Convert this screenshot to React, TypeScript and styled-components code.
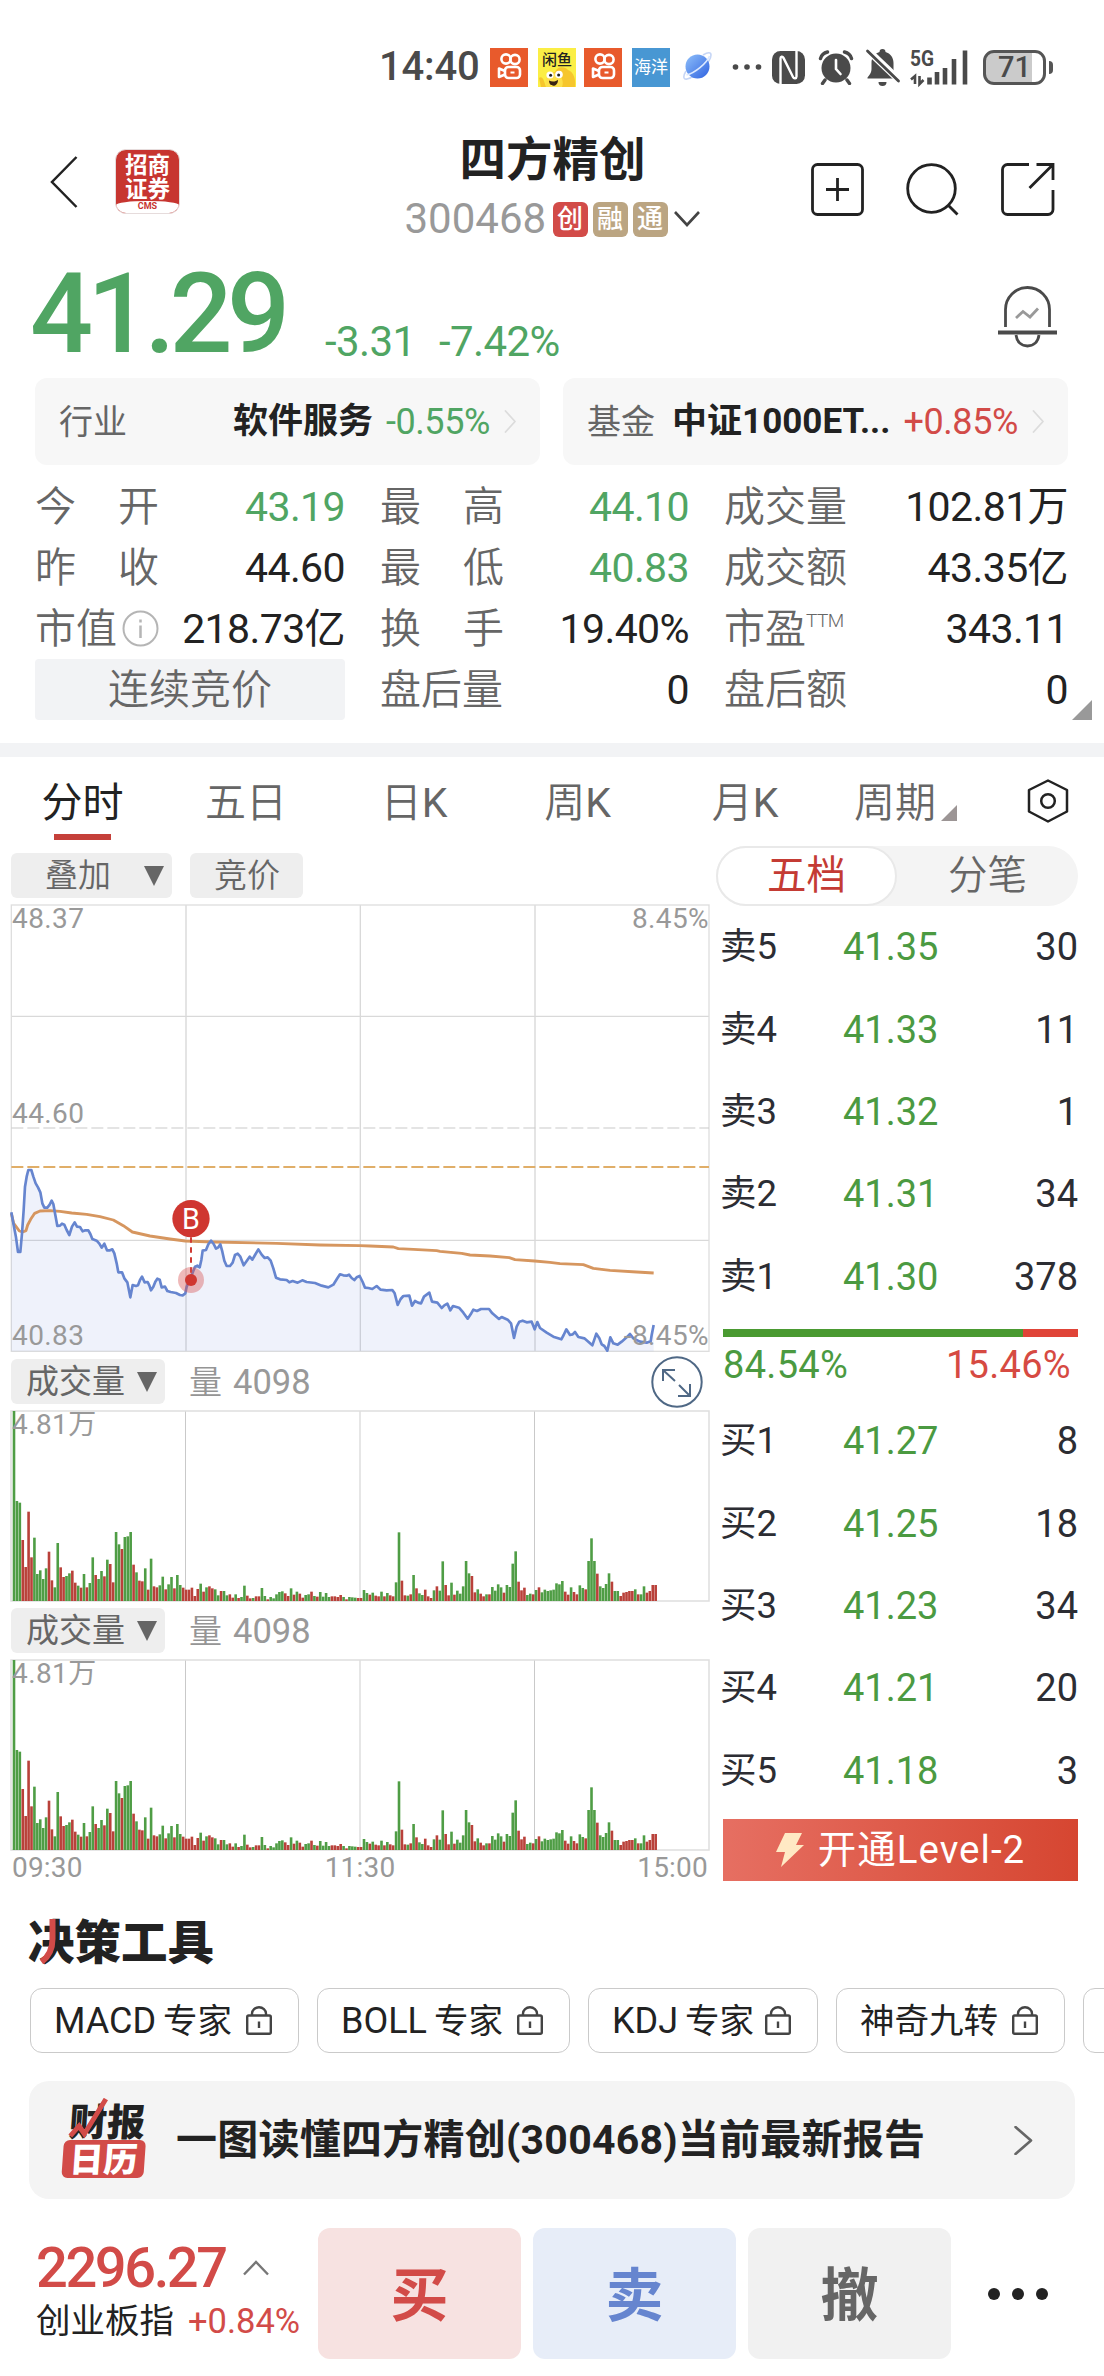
import React from 'react';
import styled, { createGlobalStyle } from 'styled-components';

const RED = '#d24b48';
const GREEN = '#50a563';
const BOOK_GREEN = '#4b9a41';
const INK = '#222';
const GREY = '#666';
const FONT = 'Roboto, "Noto Sans CJK SC", sans-serif';

const Global = createGlobalStyle`
  *, *::before, *::after { box-sizing: border-box; }
  html, body { margin: 0; background: #fff; }
  body { font-family: ${FONT}; color: ${INK}; overflow-x: hidden; }
  svg { display: block; flex: none; }
`;

const Screen = styled.div`
  width: 1104px;
  height: 2376px;
  overflow: hidden;
  background: #fff;
  white-space: nowrap;
`;

/* ---------- status bar ---------- */

const StatusBar = styled.div`
  height: 100px;
  padding: 34px 50px 0 379px;
  display: flex;
  align-items: center;
  color: #4a4a4a;
`;
const Clock = styled.span`
  width: 111px;
  font-size: 40px;
  line-height: 48px;
  font-weight: 500;
  letter-spacing: -0.2px;
`;
const AppTile = styled.span<{ $bg: string; $gap: number }>`
  width: 38px;
  height: 39px;
  margin-right: ${(p) => p.$gap}px;
  background: ${(p) => p.$bg};
  color: #fff;
  display: flex;
  align-items: center;
  justify-content: center;
  font-size: 17px;
  line-height: 20px;
`;
const Spaced = styled.span<{ $left: number }>`
  display: flex;
  margin-left: ${(p) => p.$left}px;
`;
const Battery = styled.span`
  width: 63px;
  height: 35px;
  margin-left: 15px;
  border: 3.5px solid #555;
  border-radius: 11px;
  background: linear-gradient(90deg, #cbcbcb 46px, #fff 46px);
  font-size: 29px;
  line-height: 28px;
  font-weight: 500;
  text-align: center;
`;
const BatteryTip = styled.span`
  width: 4px;
  height: 13px;
  margin-left: 3px;
  border-radius: 0 4px 4px 0;
  background: #555;
`;

const KuaiIcon = () => (
  <svg width="28" height="32" viewBox="0 0 28 32" fill="none" stroke="#fff" strokeWidth="2.6">
    <circle cx="11" cy="8" r="4.6" />
    <circle cx="20" cy="8.5" r="4.6" />
    <rect x="10" y="16" width="15" height="11" rx="3.5" />
    <path d="M10 20 4 17.5v8.5l6-2.5" strokeLinejoin="round" />
    <path d="M15.5 21.5h4" strokeWidth="2" />
  </svg>
);

const FishIcon = () => (
  <svg width="38" height="39" viewBox="0 0 38 39">
    <rect width="38" height="39" fill="#fbee45" />
    <path d="M9 39c-2-6 0-14 8-15 2-6 10-6 13-2 6 2 8 10 7 17z" fill="#f6c62d" />
    <path d="M1 30c2-2 4 0 5 3l2 6H3z" fill="#f6c62d" />
    <path d="M8 39c-2-9 3-15 10-13 6 1 8 8 6 13z" fill="#fde04a" />
    <circle cx="12" cy="27" r="3.6" fill="#fff" />
    <circle cx="21" cy="26.5" r="3.8" fill="#fff" />
    <circle cx="12.6" cy="27.3" r="1.5" fill="#222" />
    <circle cx="20.6" cy="27" r="1.5" fill="#222" />
    <path d="M11 32.5c3 1.6 7 1.2 9-.8 0 4-2.4 6-4.6 6S11 36 11 32.5z" fill="#3a2412" />
    <text x="19" y="17" textAnchor="middle" fontSize="15" fontWeight="500" fill="#222" fontFamily={'"Noto Sans CJK SC", sans-serif'}>闲鱼</text>
  </svg>
);

const GlobeIcon = () => (
  <svg width="30" height="32" viewBox="0 0 30 32">
    <defs>
      <linearGradient id="globe" x1="0" y1="0" x2="1" y2="1">
        <stop offset="0" stopColor="#8fc0fa" />
        <stop offset="1" stopColor="#2f62e0" />
      </linearGradient>
    </defs>
    <path d="M20 4c5-3 8-3 8 0 0 7-15 22-24 24-4 1-4-3-1-8" fill="none" stroke="#c6d6f6" strokeWidth="1.6" />
    <circle cx="14.5" cy="15.5" r="12" fill="url(#globe)" />
    <path d="M3.5 24C12 22 24 12 26.500 5" fill="none" stroke="#dce9ff" strokeWidth="1.6" />
  </svg>
);

const StatusIcons = () => (
  <>
    <svg width="30" height="8" viewBox="0 0 30 8" fill="#4a4a4a">
      <circle cx="3.5" cy="4" r="2.8" /><circle cx="15" cy="4" r="2.8" /><circle cx="26.5" cy="4" r="2.8" />
    </svg>
    <Spaced $left={10}>
      <svg width="33" height="33" viewBox="0 0 33 33">
        <rect width="33" height="33" rx="8.5" fill="#4a4a4a" />
        <path d="M8.5 33V7.5c0-2 2-2.500 3-.6L21 26c1 2 3.500 1.500 3.500-.5V0" fill="none" stroke="#fff" strokeWidth="2.400" />
      </svg>
    </Spaced>
    <Spaced $left={13}>
      <svg width="36" height="35" viewBox="0 0 36 35" fill="none" stroke="#4a4a4a" strokeLinecap="round">
        <circle cx="18" cy="18" r="14.5" fill="#4a4a4a" stroke="none" />
        <path d="M2.500 8.500C3.500 5 6 2.800 9.500 2M33.500 8.500C32.500 5 30 2.800 26.500 2" strokeWidth="3.4" />
        <path d="m7 30-2.500 3.500M29 30l2.500 3.500" strokeWidth="3.4" />
        <path d="M18 10v9l4.500 5" stroke="#fff" strokeWidth="2.6" />
      </svg>
    </Spaced>
    <Spaced $left={11}>
      <svg width="36" height="38" viewBox="0 0 36 38">
        <path d="M17.500 1c2 0 3 1.200 3 3 5 1.500 8 5.500 8 11v6c0 3 1 5 3.500 8.500v1H2.500v-1C5.500 26 6.500 24 6.500 21v-6c0-5.500 3-9.500 8-11 0-1.800 1-3 3-3z" fill="#4a4a4a" />
        <path d="M13.500 34h8a4 4 0 0 1-8 0z" fill="#4a4a4a" />
        <path d="M2 1.500 35 33" stroke="#fff" strokeWidth="7" />
        <path d="M2.500 3 33.500 33" stroke="#4a4a4a" strokeWidth="2.800" strokeLinecap="round" />
      </svg>
    </Spaced>
    <Spaced $left={9}>
      <svg width="58" height="48" viewBox="0 -6 58 48" overflow="visible">
        <text x="0" y="17" fontSize="22" fontWeight="700" fill="#4a4a4a" textLength="24" lengthAdjust="spacingAndGlyphs" fontFamily="Roboto">5G</text>
        <path d="M5 35v-8L1 30.500M9.500 27v8l4-4" fill="none" stroke="#4a4a4a" strokeWidth="2.6" />
        <path d="M19.500 35.500v-7M27 35.500V23M35 35.500V19M44 35.500V10M55 35.500V1.500" stroke="#4a4a4a" strokeWidth="4.600" />
      </svg>
    </Spaced>
  </>
);

/* ---------- header ---------- */

const Header = styled.header`
  height: 157px;
  padding: 31px 49px 0 50px;
  display: grid;
  grid-template-columns: 1fr auto 1fr;
`;
const HeaderLeft = styled.div`
  display: flex;
  align-items: center;
  height: 101px;
  gap: 37px;
`;
const HeaderRight = styled.div`
  display: flex;
  align-items: center;
  justify-content: flex-end;
  height: 117px;
  gap: 42px;
`;
const BrokerLogo = styled.div`
  width: 65px;
  height: 65px;
  border-radius: 11px;
  background: #c73530;
  border: 1px solid #e6dcdc;
  overflow: hidden;
  display: flex;
  flex-direction: column;
  align-items: center;
  padding-top: 3px;
  color: #fff;
  font-size: 22.5px;
  line-height: 24px;
  font-weight: 600;
`;
const BrokerTag = styled.div`
  align-self: stretch;
  flex: 1;
  background: #fff;
  border-radius: 50% 50% 0 0 / 4px 4px 0 0;
  color: #c73530;
  text-align: center;
  font-size: 9px;
  line-height: 11px;
  font-weight: 700;
`;
const TitleBlock = styled.div`
  display: flex;
  flex-direction: column;
  align-items: center;
`;
const StockName = styled.h1`
  margin: 0;
  font-size: 46.5px;
  line-height: 58px;
  font-weight: 700;
`;
const CodeLine = styled.div`
  display: flex;
  align-items: center;
  height: 60px;
`;
const Code = styled.span`
  width: 148px;
  font-size: 42px;
  line-height: 48px;
  color: #999;
`;
const Tag = styled.span<{ $bg: string }>`
  width: 35px;
  height: 35px;
  margin-right: 5px;
  border-radius: 6px;
  background: ${(p) => p.$bg};
  color: #fff;
  font-size: 26px;
  line-height: 34px;
  font-weight: 500;
  text-align: center;
`;

/* ---------- quote ---------- */

const Quote = styled.section`
  height: 121px;
  padding: 2px 47px 0 30px;
  display: flex;
`;
const LastPrice = styled.div`
  width: 295px;
  font-size: 111px;
  line-height: 110px;
  font-weight: 500;
  letter-spacing: -5.8px;
  color: ${GREEN};
`;
const Change = styled.div<{ $width: number }>`
  width: ${(p) => p.$width}px;
  padding-top: 57px;
  font-size: 42px;
  line-height: 52px;
  letter-spacing: -0.6px;
  color: ${GREEN};
`;
const BellSlot = styled.div`
  margin-left: auto;
  padding-top: 27px;
`;

const LinkCards = styled.section`
  padding: 0 36px 0 35px;
  display: grid;
  grid-template-columns: 1fr 1fr;
  gap: 23px;
`;
const LinkCard = styled.div`
  height: 87px;
  padding: 0 23px 0 24px;
  border-radius: 12px;
  background: #f7f7f7;
  display: flex;
  align-items: center;
  font-size: 34px;
  line-height: 48px;
  color: ${GREY};
`;
const CardName = styled.span`
  margin-left: auto;
  font-size: 35px;
  font-weight: 700;
  color: ${INK};
`;
const CardRate = styled.span<{ $up?: boolean }>`
  margin: 0 14px 0 13px;
  font-size: 36px;
  letter-spacing: -0.4px;
  color: ${(p) => (p.$up ? RED : GREEN)};
`;

/* ---------- stats ---------- */

const Stats = styled.section`
  position: relative;
  height: 278px;
  padding: 11px 36px 0 35px;
  display: grid;
  grid-template-columns: 310px 309px 344px;
  grid-auto-rows: 61px;
  column-gap: 35px;
`;
const Stat = styled.div`
  display: flex;
  align-items: center;
  justify-content: space-between;
  font-size: 41px;
  line-height: 60px;
`;
const StatLabel = styled.span`
  min-width: 124px;
  display: flex;
  align-items: center;
  justify-content: space-between;
  color: ${GREY};
  font-weight: 350;
`;
const StatValue = styled.span<{ $down?: boolean }>`
  color: ${(p) => (p.$down ? GREEN : INK)};
  letter-spacing: -0.6px;
`;
const Superscript = styled.sup`
  align-self: flex-start;
  flex: 1;
  margin-top: -8px;
  font-size: 19px;
  letter-spacing: -0.5px;
`;
const Phase = styled.div`
  border-radius: 4px;
  background: #f2f3f5;
  color: ${GREY};
  font-size: 41px;
  line-height: 62px;
  font-weight: 350;
  text-align: center;
`;
const Expander = styled.span`
  position: absolute;
  right: 12px;
  bottom: 23px;
  border: 10px solid;
  border-color: transparent #999 #999 transparent;
`;

const Divider = styled.div`
  height: 14px;
  background: #f2f3f5;
`;

/* ---------- period tabs ---------- */

const Tabs = styled.nav`
  height: 89px;
  padding: 16px 0 0 35px;
  display: flex;
  font-size: 41px;
  line-height: 60px;
  color: ${GREY};
`;
const Tab = styled.div<{ $width: number; $active?: boolean }>`
  width: ${(p) => p.$width}px;
  display: flex;
  justify-content: center;
  flex-wrap: wrap;
  align-content: flex-start;
  font-weight: ${(p) => (p.$active ? 400 : 350)};
  color: ${(p) => (p.$active ? INK : GREY)};
`;
const TabLatin = styled.span`
  font-weight: 400;
`;
const TabLine = styled.span`
  width: 57px;
  height: 6px;
  margin-top: 1px;
  background: #c5403a;
`;
const PeriodTab = styled.div`
  width: 150px;
  margin-left: 53px;
  display: flex;
  font-weight: 350;
`;
const Corner = styled.span`
  margin: 32px 0 0 5px;
  height: 16px;
  border: 8px solid;
  border-color: transparent #9c9595 #9c9595 transparent;
`;
const SettingsSlot = styled.span`
  margin: 6px 0 0 23px;
`;

/* ---------- market area ---------- */

const Market = styled.section`
  height: 1044px;
  padding-left: 11px;
  display: flex;
  gap: 12px;
`;
const ChartColumn = styled.div`
  width: 698px;
`;
const ChipRow = styled.div<{ $top: number; $height: number }>`
  margin-top: ${(p) => p.$top}px;
  height: ${(p) => p.$height}px;
  display: flex;
  align-items: flex-start;
  gap: 18px;
`;
const Chip = styled.div<{ $width: number; $pad: number; $strong?: boolean }>`
  width: ${(p) => p.$width}px;
  height: 45px;
  padding: 0 8px 0 ${(p) => p.$pad}px;
  border-radius: 6px;
  background: #eee;
  display: flex;
  align-items: center;
  justify-content: space-between;
  font-size: 33px;
  line-height: 46px;
  font-weight: ${(p) => (p.$strong ? 400 : 350)};
  color: ${GREY};
`;
const VolumeReading = styled.span`
  margin-left: 6px;
  display: flex;
  gap: 11px;
  font-size: 33px;
  line-height: 48px;
  font-weight: 350;
  color: #959595;
`;
const ReadingValue = styled.span`
  font-size: 34.5px;
  line-height: 46px;
  font-weight: 400;
  color: #999;
`;
const ExpandSlot = styled.span`
  margin: -3px 6px 0 auto;
`;
const Plot = styled.div<{ $height: number }>`
  position: relative;
  height: ${(p) => p.$height}px;
`;
const AxisText = styled.span<{ $top: number; $right?: boolean }>`
  position: absolute;
  top: ${(p) => p.$top}px;
  ${(p) => (p.$right ? 'right: 0;' : 'left: 1px;')}
  font-size: 28px;
  line-height: 30px;
  letter-spacing: 0.4px;
  color: #999;
`;
const Times = styled.div`
  height: 36px;
  padding: 0 1px;
  display: flex;
  justify-content: space-between;
  font-size: 28px;
  line-height: 36px;
  letter-spacing: 0.2px;
  color: #999;
`;
const ChartSvg = styled.svg`
  margin-left: -1px;
`;

const PRICE: number[] = [
  34, 247, 41, 285, 48, 322, 54, 366, 61, 366, 66, 310, 71, 240, 75, 170, 80, 140, 85, 120, 94, 120, 100, 140, 107, 160, 114, 172, 121, 187,
  127, 220, 133, 233, 142, 233, 149, 224, 155, 212, 160, 222, 165, 250, 172, 288, 180, 287, 186, 281, 193, 284, 200, 300, 208, 315, 216, 290,
  224, 277, 231, 290, 240, 291, 248, 304, 256, 301, 265, 301, 271, 312, 277, 327, 290, 332, 298, 341, 305, 353, 313, 341, 321, 361, 330, 361,
  337, 358, 343, 370, 350, 400, 355, 427, 366, 427, 373, 445, 382, 457, 391, 502, 398, 465, 408, 468, 414, 466, 420, 450, 426, 440, 434, 457,
  443, 456, 448, 466, 453, 481, 460, 470, 466, 455, 472, 446, 479, 449, 485, 472, 495, 470, 502, 483, 512, 486, 528, 489, 540, 495, 548, 496,
  556, 490, 560, 470, 573, 440, 585, 410, 592, 407, 599, 412, 604, 390, 608, 362, 618, 360, 625, 343, 633, 332, 641, 342, 648, 356, 655, 352,
  661, 343, 667, 365, 673, 392, 680, 408, 690, 408, 698, 398, 705, 375, 713, 371, 721, 380, 731, 406, 740, 393, 749, 380, 757, 389, 765, 375,
  775, 358, 785, 374, 794, 384, 803, 382, 812, 392, 820, 415, 828, 443, 840, 448, 860, 450, 868, 457, 878, 453, 893, 458, 907, 451, 920, 456,
  945, 459, 965, 467, 985, 472, 1000, 464, 1012, 445, 1020, 433, 1030, 436, 1040, 437, 1047, 434, 1055, 444, 1063, 450, 1070, 442, 1079, 438,
  1088, 456, 1095, 473, 1105, 474, 1117, 477, 1130, 468, 1142, 479, 1160, 481, 1177, 480, 1184, 490, 1193, 525, 1202, 507, 1210, 498, 1228, 497,
  1236, 527, 1245, 513, 1254, 518, 1263, 520, 1272, 500, 1288, 488, 1296, 515, 1312, 518, 1325, 534, 1333, 526, 1342, 521, 1351, 541, 1359, 528,
  1377, 533, 1390, 548, 1403, 566, 1412, 553, 1420, 539, 1431, 543, 1443, 537, 1467, 537, 1477, 550, 1497, 567, 1505, 561, 1523, 569, 1533, 580,
  1542, 624, 1550, 590, 1558, 575, 1568, 572, 1580, 577, 1595, 575, 1604, 598, 1612, 576, 1620, 594, 1640, 608, 1660, 620, 1684, 628, 1691, 615,
  1699, 598, 1710, 615, 1718, 613, 1725, 606, 1735, 621, 1753, 625, 1765, 635, 1777, 646, 1789, 611, 1798, 625, 1805, 643, 1813, 648, 1822, 662,
  1831, 622, 1840, 640, 1853, 644, 1865, 635, 1880, 622, 1890, 612, 1900, 625, 1920, 635, 1940, 638, 1952, 634, 1955, 615, 1961, 585,
];

const AVERAGE: number[] = [
  34, 250, 41, 280, 50, 292, 58, 303, 68, 306, 78, 302, 83, 285, 92, 268, 104, 250, 120, 243, 150, 242, 180, 244, 215, 249, 260, 253, 300, 260,
  340, 270, 370, 287, 397, 306, 450, 318, 510, 327, 556, 333, 640, 336, 830, 340, 960, 345, 1080, 347, 1110, 348, 1180, 351, 1195, 356, 1240, 358,
  1310, 362, 1320, 364, 1385, 370, 1410, 375, 1470, 378, 1528, 383, 1545, 389, 1604, 393, 1650, 397, 1680, 401, 1750, 404, 1780, 415, 1830, 421,
  1910, 426, 1961, 429,
];

/* One entry per minute: direction (g falling, r rising) and height in thirds of a pixel. */
const VOLUME = (
  'g570 g300 g295 r183 r102 r268 r131 g190 g81 g92 g66 g98 r148 r62 g41 g174 r101 r72 g75 g83 r91 r55 g46 r40 g81 r41 g54 g131 r78 g66 ' +
  'g90 r74 g124 r111 r56 g207 g170 r156 g192 g194 g207 r109 g86 r61 r59 g98 r34 g127 r44 r41 g47 g73 r35 g50 g72 r38 g78 g48 r40 r34 ' +
  'r34 r40 r15 r36 g52 r28 g41 r44 r38 g35 g17 r30 g30 g17 r20 r10 g20 r9 g12 g46 r16 r8 g9 r14 r14 g39 g15 r5 g12 g8 ' +
  'g20 g27 g29 r23 r15 g38 r19 g28 r22 r10 g18 g20 r28 g15 r13 g27 g13 g24 g12 r14 r14 r12 r18 g12 r5 g12 g11 g10 r9 r9 ' +
  'g33 g24 r19 g25 r16 r14 g28 r14 g24 r17 r14 g56 g206 r61 r17 g16 r20 g78 r38 g23 g18 r34 r14 r9 g32 r44 g31 g119 r48 r17 ' +
  'g55 r19 g31 g22 g44 g120 g83 r75 r26 g35 r22 r14 g20 r20 g42 g31 g50 g41 r25 g48 g42 g112 g149 r58 r32 r40 g18 g22 r20 g33 ' +
  'r41 g26 g34 g30 g32 g34 g53 g50 g60 r28 r19 g41 r27 r20 g47 g39 r35 g120 g188 g120 r82 g44 g39 g51 g83 r58 g30 g30 r15 r25 ' +
  'r27 r30 r30 g35 r20 g20 g44 r25 r30 r48 r48'
)
  .split(' ')
  .map((s) => ({ up: s[0] === 'r', h: Number(s.slice(1)) / 3 }));

const pairs = (a: number[]) => {
  const out: string[] = [];
  for (let i = 0; i < a.length; i += 2) out.push(a[i] + ',' + a[i + 1]);
  return out.join(' ');
};

const PriceChart = () => (
  <ChartSvg width="700" height="448" viewBox="30 -678 2100 1344">
    <g fill="none" strokeWidth="4">
      <path d="M558 -675V664M1605 -675V664" stroke="#c9c9c9" strokeWidth="3" />
      <path d="M34 -341H2127M1081 -675V664M34 331H2127" stroke="#d9d9d9" />
      <rect x="34" y="-675" width="2093" height="1339" stroke="#dedede" />
      <path d="M34 -6H2127" stroke="#c9c9c9" strokeWidth="3" strokeDasharray="36 12" />
      <path d="M34 111H2127" stroke="#e0ae68" strokeWidth="6" strokeDasharray="36 12" />
    </g>
    <polygon points={'34,664 ' + pairs(PRICE) + ' 1961,664'} fill="#5e81d8" fillOpacity="0.1" />
    <polyline points={pairs(AVERAGE)} fill="none" stroke="#d6965f" strokeWidth="8.5" strokeLinejoin="round" />
    <polyline points={pairs(PRICE)} fill="none" stroke="#6685cf" strokeWidth="8" strokeLinejoin="round" />
    <path d="M573 322V450" stroke="#cf3a33" strokeWidth="6" strokeDasharray="16 14" />
    <circle cx="573" cy="450" r="39" fill="#d8504f" fillOpacity="0.4" />
    <circle cx="573" cy="450" r="18" fill="#cf3630" />
    <circle cx="573" cy="266" r="56" fill="#cf3630" />
    <text x="573" y="296" fontSize="86" fill="#fff" fontFamily="Roboto" fontWeight="400" textAnchor="middle">B</text>
  </ChartSvg>
);

const VolumeChart = () => (
  <ChartSvg width="700" height="192" viewBox="0 0 700 192">
    <path d="M175.500 1V191M524.500 1V191" stroke="#c9c9c9" />
    <path d="M350 1V191" stroke="#dedede" strokeWidth="1.500" />
    <rect x="1" y="1" width="698" height="190" fill="none" stroke="#dedede" strokeWidth="1.500" />
    {VOLUME.map((v, i) => (
      <rect key={i} x={2.7 + i * 2.9167} y={191 - v.h} width="2.600" height={v.h} fill={v.up ? '#b9413a' : '#4f9d45'} />
    ))}
  </ChartSvg>
);

const DownTriangle = () => (
  <svg width="20" height="20" viewBox="0 0 20 20"><path d="M0 0h20L10 20z" fill="#666" /></svg>
);

const ExpandIcon = () => (
  <svg width="52" height="52" viewBox="0 0 52 52" fill="none" stroke="#4f6885" strokeWidth="2">
    <circle cx="26" cy="26" r="24.7" />
    <path d="M12 25V14h12M12 14l12 11M27 40h12V28M39 40 28 29" />
  </svg>
);

/* ---------- order book ---------- */

const BookColumn = styled.div`
  width: 362px;
  margin-left: -5px;
`;
const Segment = styled.div`
  height: 60px;
  border-radius: 30px;
  background: #f4f4f4;
  display: grid;
  grid-template-columns: 1fr 1fr;
`;
const SegmentItem = styled.span<{ $active?: boolean }>`
  border-radius: 30px;
  border: 2px solid ${(p) => (p.$active ? '#e9e9e9' : 'transparent')};
  background: ${(p) => (p.$active ? '#fff' : 'transparent')};
  color: ${(p) => (p.$active ? '#c43b34' : GREY)};
  font-weight: ${(p) => (p.$active ? 400 : 350)};
  font-size: 39.500px;
  line-height: 56px;
  text-align: center;
`;
const Book = styled.div`
  padding-left: 4px;
`;
const Level = styled.div`
  height: 82.400px;
  display: grid;
  grid-template-columns: 123px 1fr auto;
  align-items: center;
  font-size: 38px;
  line-height: 50px;
  color: #2c2d33;
`;
const LevelSide = styled.span`
  font-size: 36.500px;
`;
const LevelPrice = styled.span`
  color: ${BOOK_GREEN};
`;
const Ratio = styled.div`
  height: 82px;
  padding: 11px 0 0 3px;
`;
const RatioBar = styled.div`
  height: 8px;
  background: linear-gradient(90deg, #4a9a31 84.540%, #e04438 84.540%);
`;
const RatioText = styled.div`
  padding: 3px 7px 0 0;
  display: flex;
  justify-content: space-between;
  font-size: 38px;
  line-height: 50px;
  letter-spacing: 0.3px;
  color: ${BOOK_GREEN};
`;
const RatioRed = styled.span`
  color: #d64a42;
`;
const LevelTwo = styled.div`
  height: 62px;
  margin: 7px 0 0 3px;
  background: linear-gradient(90deg, #e66f62, #d64631);
  display: flex;
  align-items: center;
  justify-content: center;
  gap: 14px;
  color: #fff;
  font-size: 38.500px;
  line-height: 60px;
  letter-spacing: 1px;
`;

/* ---------- tools ---------- */

const ToolsTitle = styled.h2`
  position: relative;
  width: 190px;
  margin: 18px 0 0 28px;
  font-family: "Noto Sans CJK SC", sans-serif;
  font-size: 46.500px;
  line-height: 62px;
  font-weight: 900;
`;
const Swoosh = styled.svg`
  position: absolute;
  left: 10px;
  top: 10px;
`;
const ToolChips = styled.div`
  margin-top: 18px;
  padding-left: 30px;
  display: flex;
  gap: 18px;
`;
const ToolChip = styled.div<{ $width: number }>`
  flex: none;
  width: ${(p) => p.$width}px;
  height: 65px;
  padding: 0 26px 0 23px;
  border: 1.500px solid #cacaca;
  border-radius: 12px;
  display: flex;
  align-items: center;
  justify-content: space-between;
  font-size: 34.500px;
  line-height: 60px;
`;
const ToolWord = styled.span`
  display: flex;
  gap: 7px;
`;
const Latin = styled.span`
  font-size: 36px;
`;

const Banner = styled.div`
  margin: 28px 29px 0;
  height: 118px;
  padding: 0 42px 0 35px;
  border-radius: 20px;
  background: #f4f4f4;
  display: flex;
  align-items: center;
`;
const CalendarMark = styled.div`
  position: relative;
  width: 82px;
  height: 76px;
  transform: skewX(-4deg);
  font-family: "Noto Sans CJK SC", sans-serif;
  font-weight: 900;
`;
const MarkTop = styled.div`
  padding-left: 4px;
  font-size: 38px;
  line-height: 35px;
  height: 38px;
`;
const MarkBottom = styled.div`
  height: 38px;
  border: 3px solid ${RED};
  border-radius: 6px;
  background: ${RED};
  color: #fff;
  font-size: 34px;
  line-height: 29px;
  text-align: center;
`;
const MarkTrend = styled.svg`
  position: absolute;
  left: 0;
  top: -4px;
`;
const BannerTitle = styled.div`
  flex: 1;
  margin-left: 30px;
  font-size: 41px;
  line-height: 61px;
  font-weight: 700;
  letter-spacing: 0.250px;
`;

/* ---------- footer ---------- */

const Footer = styled.footer`
  margin-top: 29px;
  padding-left: 36px;
  display: flex;
  align-items: center;
`;
const IndexBlock = styled.div`
  width: 282px;
  padding-bottom: 5px;
`;
const IndexValue = styled.div`
  display: flex;
  align-items: center;
  gap: 16px;
  font-size: 56px;
  line-height: 60px;
  font-weight: 500;
  letter-spacing: -2.4px;
  color: ${RED};
`;
const IndexName = styled.div`
  display: flex;
  gap: 14px;
  font-size: 34.500px;
  line-height: 46px;
`;
const IndexRate = styled.span`
  color: ${RED};
`;
const TradeButton = styled.button<{ $bg: string; $fg: string }>`
  width: 203px;
  height: 131px;
  margin: 0 12px 0 0;
  padding: 5px 0 0;
  border: 0;
  border-radius: 12px;
  background: ${(p) => p.$bg};
  color: ${(p) => p.$fg};
  font-family: ${FONT};
  font-size: 58px;
  line-height: 80px;
  font-weight: 700;
`;
const More = styled.span`
  margin-left: 24px;
`;

const Chevron = ({ w, h, color, sw }: { w: number; h: number; color: string; sw: number }) => (
  <svg width={w} height={h} viewBox={`0 0 ${w} ${h}`} fill="none" stroke={color} strokeWidth={sw}>
    <path d={`M1.500 1 ${w - 2} ${h / 2} 1.500 ${h - 1}`} strokeLinecap="round" strokeLinejoin="round" />
  </svg>
);

const LockIcon = () => (
  <svg width="26" height="29" viewBox="0 0 26 29" fill="none" stroke="#444" strokeWidth="2.400">
    <rect x="1.200" y="9.500" width="23.600" height="18.200" rx="1.500" />
    <path d="M6 9.500V7.500a7 6.300 0 0 1 14 0v2M13 15.500v6.500" />
  </svg>
);

const VolumePanel = ({ top, expand }: { top: number; expand?: boolean }) => (
  <>
    <ChipRow $top={top} $height={51}>
      <Chip $width={154} $pad={15} $strong>成交量<DownTriangle /></Chip>
      <VolumeReading>量<ReadingValue>4098</ReadingValue></VolumeReading>
      {expand && <ExpandSlot><ExpandIcon /></ExpandSlot>}
    </ChipRow>
    <Plot $height={191}>
      <VolumeChart />
      <AxisText $top={0}>4.81万</AxisText>
    </Plot>
  </>
);

const STATS: [string, string, boolean?][] = [
  ['今开', '43.19', true],
  ['最高', '44.10', true],
  ['成交量', '102.81万'],
  ['昨收', '44.60'],
  ['最低', '40.83', true],
  ['成交额', '43.35亿'],
  ['市值', '218.73亿'],
  ['换手', '19.40%'],
  ['市盈', '343.11'],
  ['', ''],
  ['盘后量', '0'],
  ['盘后额', '0'],
];

const InfoIcon = () => (
  <svg width="37" height="37" viewBox="0 0 37 37" fill="none" stroke="#b5b5b5" strokeWidth="2">
    <circle cx="18.500" cy="18.500" r="17" />
    <path d="M18.500 15.500V28M18.500 9.500v3" strokeWidth="2.500" />
  </svg>
);

const ASKS = [['卖5', '41.35', '30'], ['卖4', '41.33', '11'], ['卖3', '41.32', '1'], ['卖2', '41.31', '34'], ['卖1', '41.30', '378']];
const BIDS = [['买1', '41.27', '8'], ['买2', '41.25', '18'], ['买3', '41.23', '34'], ['买4', '41.21', '20'], ['买5', '41.18', '3']];

const Levels = ({ rows }: { rows: string[][] }) => (
  <>
    {rows.map(([side, price, qty]) => (
      <Level key={side}>
        <LevelSide>{side}</LevelSide>
        <LevelPrice>{price}</LevelPrice>
        <span>{qty}</span>
      </Level>
    ))}
  </>
);

export default function App() {
  return (
    <Screen>
      <Global />
      <StatusBar>
        <Clock>14:40</Clock>
        <AppTile $bg="#e85a2c" $gap={10}><KuaiIcon /></AppTile>
        <AppTile $bg="#fbee45" $gap={8}><FishIcon /></AppTile>
        <AppTile $bg="#e85a2c" $gap={10}><KuaiIcon /></AppTile>
        <AppTile $bg="#4897d3" $gap={13}>海洋</AppTile>
        <GlobeIcon />
        <Spaced $left={19} />
        <StatusIcons />
        <Battery>71</Battery>
        <BatteryTip />
      </StatusBar>

      <Header>
        <HeaderLeft>
          <svg width="28" height="54" viewBox="0 0 28 54" fill="none" stroke="#222" strokeWidth="2.500">
            <path d="M26.500 2 2 27l24.500 25" />
          </svg>
          <BrokerLogo>
            <span>招商</span>
            <span>证券</span>
            <BrokerTag>CMS</BrokerTag>
          </BrokerLogo>
        </HeaderLeft>
        <TitleBlock>
          <StockName>四方精创</StockName>
          <CodeLine>
            <Code>300468</Code>
            <Tag $bg="#d24b48">创</Tag>
            <Tag $bg="#bba582">融</Tag>
            <Tag $bg="#bba582">通</Tag>
            <svg width="28" height="18" viewBox="0 0 28 18" fill="none" stroke="#444" strokeWidth="2.600"><path d="m2 2 12 13L26 2" /></svg>
          </CodeLine>
        </TitleBlock>
        <HeaderRight>
          <svg width="53" height="53" viewBox="0 0 53 53" fill="none" stroke="#222" strokeWidth="2.800">
            <rect x="1.500" y="1.500" width="50" height="50" rx="5" />
            <path d="M26.500 15v23M15 26.500h23" />
          </svg>
          <svg width="53" height="53" viewBox="0 0 53 53" fill="none" stroke="#222" strokeWidth="2.800">
            <circle cx="25.500" cy="25.500" r="23.800" />
            <path d="m42 42 9.500 9.500" />
          </svg>
          <svg width="54" height="53" viewBox="0 0 54 53" fill="none" stroke="#222" strokeWidth="2.800">
            <path d="M28 1.500H6.500a5 5 0 0 0-5 5v40a5 5 0 0 0 5 5h40.500a5 5 0 0 0 5-5V27M35.500 1.500H52V17M52 1.500 28.500 25" />
          </svg>
        </HeaderRight>
      </Header>

      <Quote>
        <LastPrice>41.29</LastPrice>
        <Change $width={114}>-3.31</Change>
        <Change $width={150}>-7.42%</Change>
        <BellSlot>
          <svg width="59" height="62" viewBox="0 0 59 62" fill="none" stroke="#4a4a4a" strokeWidth="2.800">
            <path d="M7.500 41V23.500a22 22 0 0 1 44 0V41" />
            <path d="M0 46.500h59" strokeWidth="4" />
            <path d="M18 49c1 7.500 6 11 11.500 11S40 56.500 41 49" />
            <path d="m18 32 7-6.500 7 5.500 8-8.500" stroke="#999" />
          </svg>
        </BellSlot>
      </Quote>

      <LinkCards>
        <LinkCard>
          行业<CardName>软件服务</CardName><CardRate>-0.55%</CardRate>
          <Chevron w={13} h={23} color="#dcdcdc" sw={1.8} />
        </LinkCard>
        <LinkCard>
          基金<CardName>中证1000ET...</CardName><CardRate $up>+0.85%</CardRate>
          <Chevron w={13} h={23} color="#dcdcdc" sw={1.8} />
        </LinkCard>
      </LinkCards>

      <Stats>
        {STATS.map(([label, value, down], i) =>
          label === '' ? (
            <Phase key={i}>连续竞价</Phase>
          ) : (
            <Stat key={i}>
              <StatLabel>
                {label === '市盈' ? (
                  <>市盈<Superscript>TTM</Superscript></>
                ) : label === '市值' ? (
                  <>市值<InfoIcon /></>
                ) : label.length === 2 ? (
                  <><span>{label[0]}</span><span>{label[1]}</span></>
                ) : (
                  label
                )}
              </StatLabel>
              <StatValue $down={down}>{value}</StatValue>
            </Stat>
          )
        )}
        <Expander />
      </Stats>

      <Divider />

      <Tabs>
        <Tab $width={95} $active>分时<TabLine /></Tab>
        <Tab $width={232}>五日</Tab>
        <Tab $width={104}>日<TabLatin>K</TabLatin></Tab>
        <Tab $width={223}>周<TabLatin>K</TabLatin></Tab>
        <Tab $width={112}>月<TabLatin>K</TabLatin></Tab>
        <PeriodTab>周期<Corner /></PeriodTab>
        <SettingsSlot>
          <svg width="42" height="44" viewBox="0 0 42 44" fill="none" stroke="#222" strokeWidth="2.500">
            <path d="m21 1.500 19 9.500v21.500l-19 10-19-10V11z" strokeLinejoin="round" />
            <circle cx="21" cy="22" r="6.800" />
          </svg>
        </SettingsSlot>
      </Tabs>

      <Market>
        <ChartColumn>
          <ChipRow $top={7} $height={51}>
            <Chip $width={161} $pad={34}>叠加<DownTriangle /></Chip>
            <Chip $width={113} $pad={24}>竞价</Chip>
          </ChipRow>
          <Plot $height={448}>
            <PriceChart />
            <AxisText $top={0}>48.37</AxisText>
            <AxisText $top={0} $right>8.45%</AxisText>
            <AxisText $top={195}>44.60</AxisText>
            <AxisText $top={417}>40.83</AxisText>
            <AxisText $top={417} $right>-8.45%</AxisText>
          </Plot>
          <VolumePanel top={7} expand />
          <VolumePanel top={7} />
          <Times><span>09:30</span><span>11:30</span><span>15:00</span></Times>
        </ChartColumn>

        <BookColumn>
          <Segment>
            <SegmentItem $active>五档</SegmentItem>
            <SegmentItem>分笔</SegmentItem>
          </Segment>
          <Book>
            <Levels rows={ASKS} />
            <Ratio>
              <RatioBar />
              <RatioText><span>84.54%</span><RatioRed>15.46%</RatioRed></RatioText>
            </Ratio>
            <Levels rows={BIDS} />
            <LevelTwo>
              <svg width="28" height="34" viewBox="0 0 28 34">
                <path d="M9 0h17l-6 12h8L5 34l4-15H0z" fill="#ffe9c4" />
              </svg>
              开通Level-2
            </LevelTwo>
          </Book>
        </BookColumn>
      </Market>

      <ToolsTitle>
        决策工具
        <Swoosh width="20" height="46" viewBox="0 0 20 46" fill="none">
          <path d="M14.500 1v20c0 10-3 17-11 23" stroke={RED} strokeWidth="6" />
        </Swoosh>
      </ToolsTitle>
      <ToolChips>
        <ToolChip $width={269}><ToolWord><Latin>MACD</Latin>专家</ToolWord><LockIcon /></ToolChip>
        <ToolChip $width={253}><ToolWord><Latin>BOLL</Latin>专家</ToolWord><LockIcon /></ToolChip>
        <ToolChip $width={230}><ToolWord><Latin>KDJ</Latin>专家</ToolWord><LockIcon /></ToolChip>
        <ToolChip $width={229}>神奇九转<LockIcon /></ToolChip>
        <ToolChip $width={229} />
      </ToolChips>

      <Banner>
        <CalendarMark>
          <MarkTop>财报</MarkTop>
          <MarkBottom>日历</MarkBottom>
          <MarkTrend width="44" height="42" viewBox="0 0 44 42" fill="none">
            <path d="m6 38 8-10 6 8L39 1" stroke={RED} strokeWidth="5" />
          </MarkTrend>
        </CalendarMark>
        <BannerTitle>一图读懂四方精创(300468)当前最新报告</BannerTitle>
        <Chevron w={19} h={29} color="#666" sw={2.6} />
      </Banner>

      <Footer>
        <IndexBlock>
          <IndexValue>
            2296.27
            <svg width="28" height="16" viewBox="0 0 28 16" fill="none" stroke="#777" strokeWidth="2.400"><path d="M2 14.500 14 2l12 12.500" /></svg>
          </IndexValue>
          <IndexName>创业板指<IndexRate>+0.84%</IndexRate></IndexName>
        </IndexBlock>
        <TradeButton $bg="#f7e2e1" $fg={RED}>买</TradeButton>
        <TradeButton $bg="#e7edf8" $fg="#6685cf">卖</TradeButton>
        <TradeButton $bg="#f1f1f1" $fg="#666">撤</TradeButton>
        <More>
          <svg width="62" height="14" viewBox="0 0 62 14" fill="#222">
            <circle cx="7" cy="7" r="6" /><circle cx="31" cy="7" r="6" /><circle cx="55" cy="7" r="6" />
          </svg>
        </More>
      </Footer>
    </Screen>
  );
}
